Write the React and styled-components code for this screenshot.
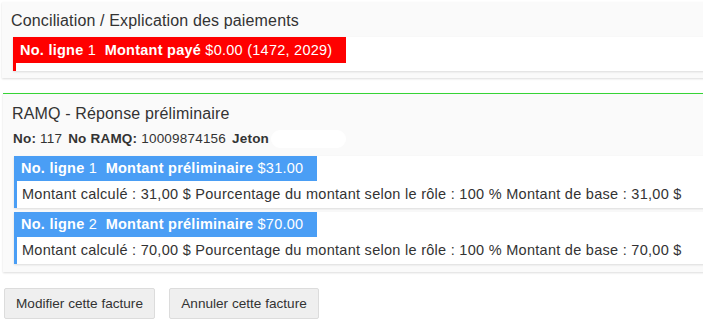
import React from "react";
import styled, { createGlobalStyle } from "styled-components";

const Global = createGlobalStyle`
  html, body { margin: 0; padding: 0; background: #fff; overflow: hidden; }
  body { font-family: "Liberation Sans", Arial, sans-serif; color: #333; }
`;

const Page = styled.div`
  width: 703px;
  padding: 2px 0 0 2px;
  box-sizing: border-box;
`;

const Panel = styled.section`
  background: #fafafa;
  box-shadow: 0 1px 2px rgba(0, 0, 0, 0.14);
  padding: ${(p) => p.$pad};
  border-top: ${(p) => (p.$accent ? `1px solid ${p.$accent}` : "none")};
  margin: ${(p) => p.$margin || "0"};
  margin-right: -4px;
`;

const Title = styled.h2`
  margin: 0;
  font-size: 16px;
  letter-spacing: 0.15px;
  font-weight: normal;
  line-height: 22px;
  color: #333;
  padding-left: ${(p) => p.$indent || "9px"};
`;

const Info = styled.div`
  display: flex;
  align-items: center;
  font-size: 13.5px;
  letter-spacing: 0.2px;
  line-height: 20px;
  color: #333;
  padding-left: 10px;
  margin-top: 4px;
  gap: 6px;
  b { font-weight: bold; }
`;

const Hidden = styled.span`
  display: inline-block;
  width: 75px;
  height: 18px;
  border-radius: 9px;
  background: #fff;
  margin-left: -4px;
`;

const Lines = styled.div`
  display: flex;
  flex-direction: column;
  gap: 4px;
  margin: ${(p) => p.$margin};
`;

const Line = styled.div`
  display: flex;
  flex-direction: column;
  align-items: flex-start;
  background: #fff;
  border-left: 3px solid ${(p) => p.$color};
  box-shadow: 0 1px 2px rgba(0, 0, 0, 0.12);
`;

const LineHead = styled.div`
  background: ${(p) => p.$color};
  color: #fff;
  font-size: 14.5px;
  letter-spacing: 0.25px;
  line-height: ${(p) => p.$h};
  height: ${(p) => p.$h};
  padding: 0 14px 0 4px;
  white-space: pre;
  b { font-weight: bold; }
`;

const LineBody = styled.div`
  font-size: 14.5px;
  letter-spacing: 0.28px;
  line-height: 27px;
  height: ${(p) => p.$h || "27px"};
  color: #333;
  padding-left: 5px;
  white-space: nowrap;
`;

const Buttons = styled.div`
  display: flex;
  gap: 14px;
  margin: 16px 0 0 2px;
`;

const Button = styled.button`
  font-family: "Liberation Sans", Arial, sans-serif;
  font-size: 13.6px;
  color: #333;
  background: #efefef;
  border: 1px solid #dcdcdc;
  border-radius: 2px;
  height: 31px;
  width: ${(p) => p.$w};
  padding: 0;
`;

export default function App() {
  return (
    <Page>
      <Global />
      <Panel $pad="8px 0 7px 0">
        <Title>Conciliation / Explication des paiements</Title>
        <Lines $margin="5px 0 0 11px">
          <Line $color="#ff0000">
            <LineHead $color="#ff0000" $h="26px">
              <b>No. ligne</b> 1  <b>Montant payé</b> $0.00 (1472, 2029)
            </LineHead>
            <LineBody $h="8px" />
          </Line>
        </Lines>
      </Panel>
      <Panel $pad="9px 0 8px 0" $accent="#36d436" $margin="15px 0 0 1px">
        <Title $indent="9px">RAMQ - Réponse préliminaire</Title>
        <Info>
          <span>
            <b>No:</b> 117
          </span>
          <span>
            <b>No RAMQ:</b> 10009874156
          </span>
          <b>Jeton</b>
          <Hidden />
        </Info>
        <Lines $margin="7px 0 0 11px">
          <Line $color="#4a9ef5">
            <LineHead $color="#4a9ef5" $h="25px">
              <b>No. ligne</b> 1  <b>Montant préliminaire</b> $31.00
            </LineHead>
            <LineBody>
              Montant calculé : 31,00 $ Pourcentage du montant selon le rôle : 100 % Montant de base : 31,00 $
            </LineBody>
          </Line>
          <Line $color="#4a9ef5">
            <LineHead $color="#4a9ef5" $h="25px">
              <b>No. ligne</b> 2  <b>Montant préliminaire</b> $70.00
            </LineHead>
            <LineBody>
              Montant calculé : 70,00 $ Pourcentage du montant selon le rôle : 100 % Montant de base : 70,00 $
            </LineBody>
          </Line>
        </Lines>
      </Panel>
      <Buttons>
        <Button $w="151px">Modifier cette facture</Button>
        <Button $w="150px">Annuler cette facture</Button>
      </Buttons>
    </Page>
  );
}
